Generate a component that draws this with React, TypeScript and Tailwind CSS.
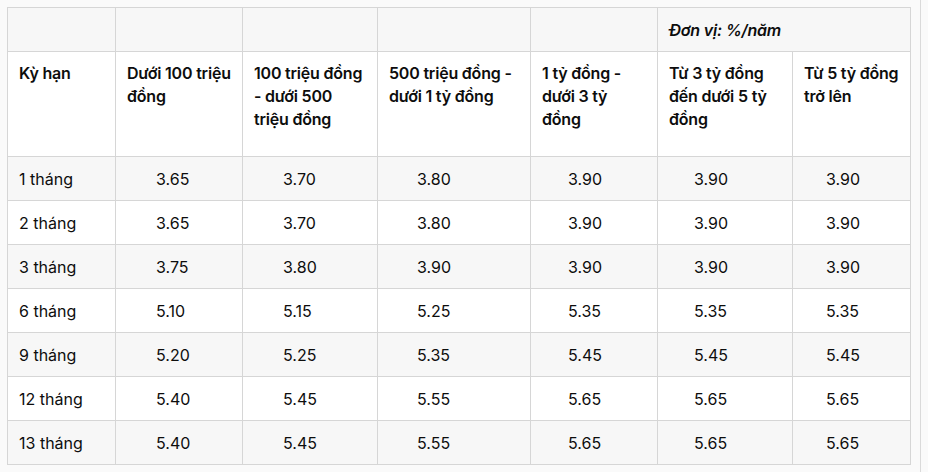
import React from 'react';

// tiêu đề cột, ngắt dòng giống bản gốc
const headers = [
    ['Kỳ hạn'],
    ['Dưới 100 triệu', 'đồng'],
    ['100 triệu đồng', '- dưới 500', 'triệu đồng'],
    ['500 triệu đồng -', 'dưới 1 tỷ đồng'],
    ['1 tỷ đồng -', 'dưới 3 tỷ', 'đồng'],
    ['Từ 3 tỷ đồng', 'đến dưới 5 tỷ', 'đồng'],
    ['Từ 5 tỷ đồng', 'trở lên'],
];

const rows: [string, string[]][] = [
    ['1 tháng', ['3.65', '3.70', '3.80', '3.90', '3.90', '3.90']],
    ['2 tháng', ['3.65', '3.70', '3.80', '3.90', '3.90', '3.90']],
    ['3 tháng', ['3.75', '3.80', '3.90', '3.90', '3.90', '3.90']],
    ['6 tháng', ['5.10', '5.15', '5.25', '5.35', '5.35', '5.35']],
    ['9 tháng', ['5.20', '5.25', '5.35', '5.45', '5.45', '5.45']],
    ['12 tháng', ['5.40', '5.45', '5.55', '5.65', '5.65', '5.65']],
    ['13 tháng', ['5.40', '5.45', '5.55', '5.65', '5.65', '5.65']],
];

// khoảng lề trái của từng cột số
const numPad = ['pl-[40px]', 'pl-[40px]', 'pl-[39px]', 'pl-[37px]', 'pl-[36px]', 'pl-[33px]'];
const colWidths = ['w-[108px]', 'w-[127px]', 'w-[135px]', 'w-[153px]', 'w-[127px]', 'w-[135px]', 'w-[118px]'];

export default function App() {
    return (
        <div className="w-[928px] h-[472px] bg-[#fafafa] flex font-['Inter',sans-serif] text-[#0d0d0d] text-[16px]">
            <div className="w-[921px] pt-[7px] pl-[7px] border-r border-[#dadada]">
                <table className="table-fixed border-collapse w-[903px]">
                    <colgroup>
                        {colWidths.map((w, i) => (
                            <col key={i} className={w} />
                        ))}
                    </colgroup>
                    <thead>
                        <tr className="h-[44px] bg-[#f7f7f7]">
                            <th className="border border-[#d6d6d6]"></th>
                            <th className="border border-[#d6d6d6]"></th>
                            <th className="border border-[#d6d6d6]"></th>
                            <th className="border border-[#d6d6d6]"></th>
                            <th className="border border-[#d6d6d6]"></th>
                            <th colSpan={2} className="border border-[#d6d6d6] px-[11px] text-left font-semibold italic tracking-[-0.2px]">
                                Đơn vị: %/năm
                            </th>
                        </tr>
                        <tr className="h-[105px] bg-white">
                            {headers.map((lines, i) => (
                                <th
                                    key={i}
                                    className="border border-[#d6d6d6] align-top pt-[10px] pl-[11px] text-left font-semibold leading-[23px] tracking-[-0.2px] whitespace-nowrap"
                                >
                                    {lines.map((l, j) => (
                                        <div key={j}>{l}</div>
                                    ))}
                                </th>
                            ))}
                        </tr>
                    </thead>
                    <tbody>
                        {rows.map(([term, vals], r) => (
                            <tr key={term} className={`h-[44px] ${r % 2 === 0 ? 'bg-[#f7f7f7]' : 'bg-white'}`}>
                                <td className="border border-[#d6d6d6] px-[11px]">{term}</td>
                                {vals.map((v, i) => (
                                    <td key={i} className={`border border-[#d6d6d6] ${numPad[i]}`}>
                                        {v}
                                    </td>
                                ))}
                            </tr>
                        ))}
                    </tbody>
                </table>
            </div>
        </div>
    );
}
